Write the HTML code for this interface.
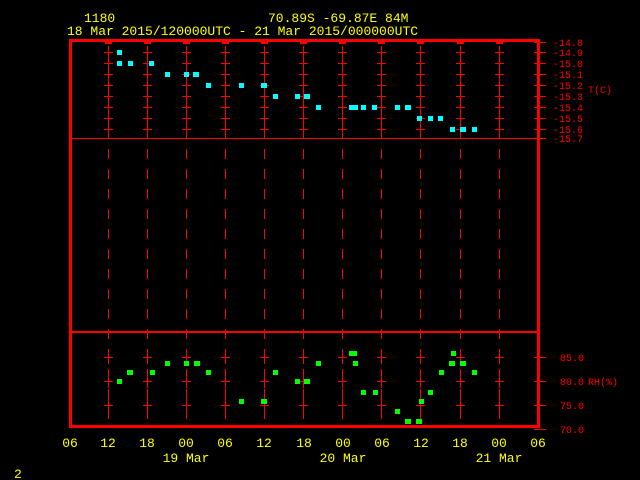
<!DOCTYPE html>
<html><head><style>
html,body{margin:0;padding:0;background:#000;width:640px;height:480px;overflow:hidden}
svg{display:block}
text{font-family:"Liberation Mono",monospace}
</style></head><body>
<svg width="640" height="480" viewBox="0 0 640 480" shape-rendering="crispEdges">
<rect width="640" height="480" fill="#000"/>
<g fill="#ffff00" font-size="13">
<text x="84" y="22">1180</text>
<text x="268" y="22">70.89S  -69.87E   84M</text>
<text x="67" y="35">18 Mar 2015/120000UTC - 21 Mar 2015/000000UTC</text>
<g text-anchor="middle">
<text x="70" y="447">06</text><text x="108" y="447">12</text><text x="147" y="447">18</text><text x="186" y="447">00</text><text x="225" y="447">06</text><text x="264" y="447">12</text><text x="304" y="447">18</text><text x="343" y="447">00</text><text x="382" y="447">06</text><text x="421" y="447">12</text><text x="460" y="447">18</text><text x="499" y="447">00</text><text x="538" y="447">06</text>
<text x="186" y="462">19 Mar</text><text x="343" y="462">20 Mar</text><text x="499" y="462">21 Mar</text>
</g>
<text x="14" y="478">2</text>
</g>
<g id="ticks" fill="#ff0000"></g>
<g fill="#ff0000">
<rect x="69" y="39" width="471" height="3"/>
<rect x="69" y="425" width="471" height="3"/>
<rect x="69" y="39" width="3" height="389"/>
<rect x="537" y="39" width="3" height="389"/>
<rect x="70" y="138" width="468" height="1"/>
<rect x="70" y="331" width="468" height="2"/>
</g>
<g fill="#ff0000" font-size="10">
<text x="553" y="46">-14.8</text><text x="553" y="56">-14.9</text><text x="553" y="67">-15.0</text><text x="553" y="78">-15.1</text><text x="553" y="89">-15.2</text><text x="553" y="100">-15.3</text><text x="553" y="111">-15.4</text><text x="553" y="122">-15.5</text><text x="553" y="133">-15.6</text><text x="553" y="142">-15.7</text>
<text x="588" y="93">T(C)</text>
<text x="560" y="361">85.0</text><text x="560" y="385">80.0</text><text x="560" y="409">75.0</text><text x="560" y="433">70.0</text>
<text x="588" y="385">RH(%)</text>
</g>
<g fill="#00ffff" id="cy"></g>
<g fill="#00ff00" id="gr"></g>
</svg>
<script>
var ns="http://www.w3.org/2000/svg";
function el(p,t,a){var e=document.createElementNS(ns,t);for(var k in a)e.setAttribute(k,a[k]);p.appendChild(e);}
function r(p,x,y,w,h){el(p,"rect",{x:x,y:y,width:w,height:h});}
var tk=document.getElementById("ticks");
var xs=[108,147,186,225,264,303,342,381,420,460,499];
var rows=[52,63,74,85,96,107,118,129,357,381,405];
xs.forEach(function(x){
for(var y=29;y<425;y+=20){var y0=Math.max(y,40),y1=Math.min(y+10,425);if(y1>y0)r(tk,x,y0,1,y1-y0);}
rows.forEach(function(y){r(tk,x-4,y,9,1);r(tk,x,y-6,1,13);});
r(tk,x-3,40,7,4);
});
[42,52,63,74,85,96,107,118,129,138,357,381,405,429].forEach(function(y){r(tk,534,y,12,1);});
var cy=document.getElementById("cy");
[[119,52,5],[119,63,5],[130,63,5],[151,63,5],[167,74,5],[186,74,5],[196,74,6],[208,85,5],[241,85,5],[264,85,6],[275,96,5],[297,96,5],[307,96,6],[318,107,5],[353,107,9],[363,107,5],[374,107,5],[397,107,5],[408,107,6],[419,118,5],[430,118,5],[440,118,5],[452,129,5],[463,129,6],[474,129,5]].forEach(function(p){r(cy,Math.round(p[0]-p[2]/2),p[1]-2,p[2],5);});
var gr=document.getElementById("gr");
[[119,381,5],[130,372,6],[152,372,5],[167,363,5],[186,363,5],[197,363,6],[208,372,5],[241,401,5],[264,401,6],[275,372,5],[297,381,5],[307,381,6],[318,363,5],[353,353,8],[355,363,5],[363,392,5],[375,392,5],[397,411,5],[408,421,6],[419,421,6],[421,401,5],[430,392,5],[441,372,5],[453,353,5],[452,363,6],[463,363,6],[474,372,5]].forEach(function(p){r(gr,Math.round(p[0]-p[2]/2),p[1]-2,p[2],5);});
</script>
</body></html>
